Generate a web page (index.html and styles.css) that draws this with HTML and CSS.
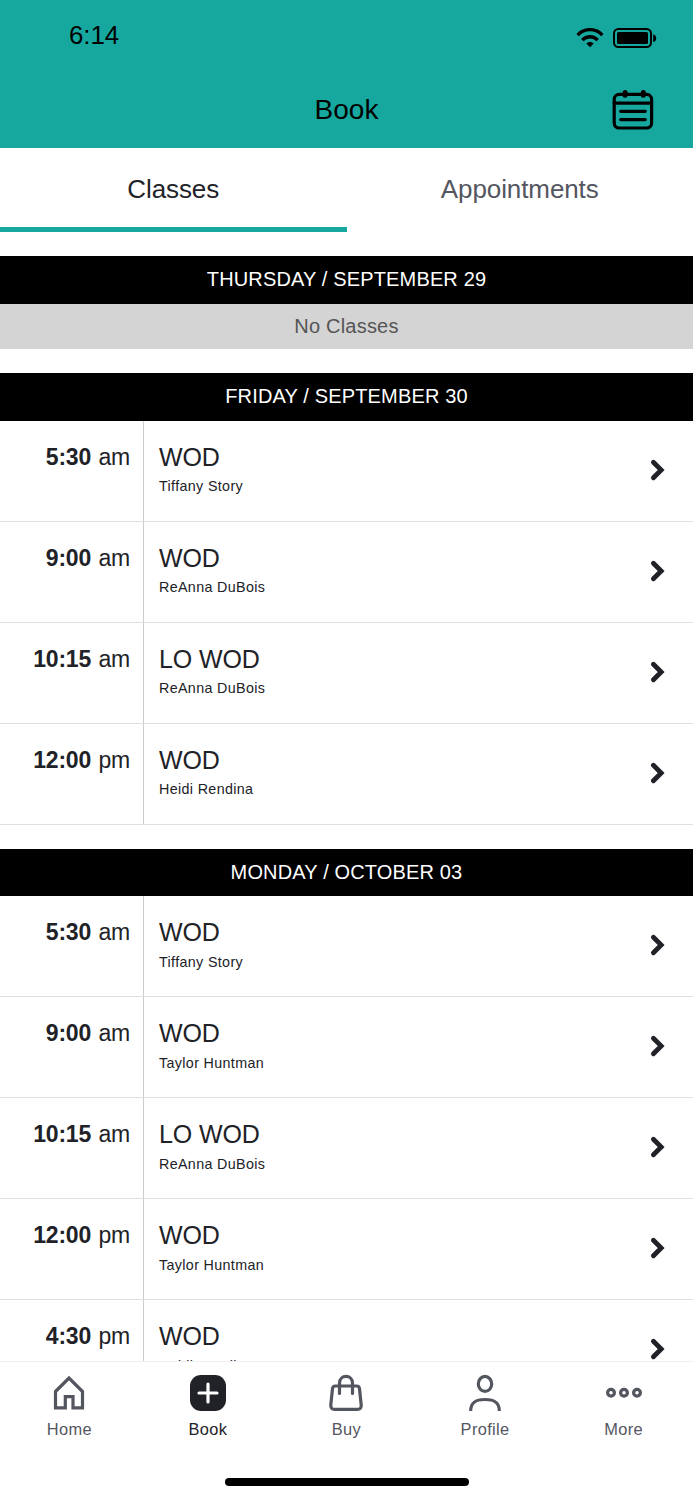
FILE: index.html
```html
<!DOCTYPE html>
<html lang="en">
<head>
<meta charset="utf-8">
<title>Book</title>
<link rel="stylesheet" href="styles.css">
</head>
<body>
<svg class="defs" width="0" height="0" aria-hidden="true">
  <symbol id="chevron" viewBox="0 0 16 24"><path d="M3.4 4.2 11.2 12 3.4 19.8" fill="none" stroke="currentColor" stroke-width="4.8" stroke-linecap="round" stroke-linejoin="miter"/></symbol>
</svg>
<div class="app">
  <header class="top">
    <div class="status">
      <span class="clock">6:14</span>
      <div class="status-icons">
        <svg width="28" height="20" viewBox="0 0 28 20"><g fill="none" stroke="#000" stroke-width="3.3"><path d="M1.6 7.1C8.5-.3 19.5-.3 26.4 7.1"/><path d="M6.3 12.1C10.5 7.6 17.5 7.6 21.7 12.1"/></g><path d="M14 19.2 10.300 15.600C11.800 13.500 16.200 13.500 17.700 15.600Z"/></svg>
        <svg width="44" height="20" viewBox="0 0 44 20"><rect x="1" y="1" width="37" height="18" rx="4.5" fill="none" stroke="#000" stroke-width="2"/><rect x="4" y="4" width="31" height="12" rx="1.5"/><path d="M40.200 6.200C44.200 7.400 44.200 13 40.200 14.200Z"/></svg>
      </div>
    </div>
    <div class="title-bar">
      <h1 class="title">Book</h1>
      <svg class="calendar" width="42" height="42" viewBox="0 0 42 42" fill="none" stroke="#000" stroke-width="3.2" stroke-linecap="round"><rect x="2.2" y="6.4" width="37.4" height="33.6" rx="5"/><path d="M2.2 15.100H39.600M8.700 23.300H33.300M8.700 31.600H33.300"/><path d="M13.100 4.400V7.300M31.300 4.400V7.300" stroke-width="5"/></svg>
    </div>
  </header>
  <nav class="tabs">
    <a class="tab tab-active">Classes</a>
    <a class="tab">Appointments</a>
  </nav>
  <main class="schedule">
    <section class="day">
      <h2 class="day-title">THURSDAY / SEPTEMBER 29</h2>
      <p class="empty">No Classes</p>
    </section>
    <section class="day">
      <h2 class="day-title">FRIDAY / SEPTEMBER 30</h2>
      <div class="row"><div class="time"><b>5:30</b> am</div><div class="info"><div class="name">WOD</div><div class="coach">Tiffany Story</div></div><svg class="chevron"><use href="#chevron"/></svg></div>
      <div class="row"><div class="time"><b>9:00</b> am</div><div class="info"><div class="name">WOD</div><div class="coach">ReAnna DuBois</div></div><svg class="chevron"><use href="#chevron"/></svg></div>
      <div class="row"><div class="time"><b>10:15</b> am</div><div class="info"><div class="name">LO WOD</div><div class="coach">ReAnna DuBois</div></div><svg class="chevron"><use href="#chevron"/></svg></div>
      <div class="row"><div class="time"><b>12:00</b> pm</div><div class="info"><div class="name">WOD</div><div class="coach">Heidi Rendina</div></div><svg class="chevron"><use href="#chevron"/></svg></div>
    </section>
    <section class="day">
      <h2 class="day-title">MONDAY / OCTOBER 03</h2>
      <div class="row"><div class="time"><b>5:30</b> am</div><div class="info"><div class="name">WOD</div><div class="coach">Tiffany Story</div></div><svg class="chevron"><use href="#chevron"/></svg></div>
      <div class="row"><div class="time"><b>9:00</b> am</div><div class="info"><div class="name">WOD</div><div class="coach">Taylor Huntman</div></div><svg class="chevron"><use href="#chevron"/></svg></div>
      <div class="row"><div class="time"><b>10:15</b> am</div><div class="info"><div class="name">LO WOD</div><div class="coach">ReAnna DuBois</div></div><svg class="chevron"><use href="#chevron"/></svg></div>
      <div class="row"><div class="time"><b>12:00</b> pm</div><div class="info"><div class="name">WOD</div><div class="coach">Taylor Huntman</div></div><svg class="chevron"><use href="#chevron"/></svg></div>
      <div class="row"><div class="time"><b>4:30</b> pm</div><div class="info"><div class="name">WOD</div><div class="coach">Heidi Rendina</div></div><svg class="chevron"><use href="#chevron"/></svg></div>
    </section>
  </main>
  <footer class="bottom">
    <nav class="nav">
      <a class="nav-item"><svg class="nav-icon" viewBox="0 0 40 40"><path d="M6.5 18.500 20 5 33.500 18.500V34.800H24V23.700H16.300V34.800H6.500Z"/></svg>Home</a>
      <a class="nav-item nav-active"><svg class="nav-icon" viewBox="0 0 40 40"><rect x="2" y="2" width="36" height="36" rx="11" fill="#212227" stroke="none"/><path d="M20 11V29M11 20H29" stroke="#fff" stroke-linecap="round"/></svg>Book</a>
      <a class="nav-item"><svg class="nav-icon" viewBox="0 0 40 40"><path d="M9.5 13H30.500Q33.200 13 33.500 15.700L35.200 31.800Q35.600 36.300 31.300 36.300H8.700Q4.400 36.300 4.800 31.800L6.500 15.700Q6.800 13 9.500 13Z"/><path d="M13.500 20.500V10.200C13.500 1.200 26.500 1.200 26.500 10.200V20.500" stroke-linecap="round"/></svg>Buy</a>
      <a class="nav-item"><svg class="nav-icon" viewBox="0 0 40 40"><ellipse cx="20" cy="10.900" rx="6.700" ry="7.500"/><path d="M5.700 37.900C5.700 30 10 26.500 20 26.500S34.300 30 34.300 37.900"/></svg>Profile</a>
      <a class="nav-item"><svg class="nav-icon" viewBox="0 0 40 40"><circle cx="7" cy="19.800" r="3.400"/><circle cx="20" cy="19.800" r="3.400"/><circle cx="33" cy="19.800" r="3.400"/></svg>More</a>
    </nav>
    <div class="home-bar"></div>
  </footer>
</div>
</body>
</html>
```
FILE: styles.css
```css
* { box-sizing: border-box; }
body { margin: 0; background: #fff; color: #212227; font-family: "Liberation Sans", Arial, sans-serif; }
.defs { position: absolute; }
.app { display: flex; flex-direction: column; height: 1500px; overflow: hidden; }
.top { flex: none; height: 147.6px; background: #16a89e; color: #000; }
.status { display: flex; justify-content: space-between; height: 70px; padding: 0 36px 0 69px; align-items: center; }
.clock { font-size: 25.8px; line-height: 30px; }
.status-icons { display: flex; gap: 9px; padding-top: 6px; }
.title-bar { display: grid; grid-template-columns: 80px 1fr 80px; align-items: center; height: 78px; }
.title { grid-column: 2; margin: 0; padding-top: 1px; font-size: 28px; line-height: 34px; font-weight: 400; text-align: center; }
.calendar { justify-self: end; margin-right: 39px; }
.tabs { flex: none; display: flex; height: 84.4px; }
.tab { flex: 1; font-size: 26px; line-height: 30px; padding-top: 26px; text-align: center; color: #54565f; letter-spacing: -.1px; border-bottom: 5px solid transparent; }
.tab-active { color: #212227; border-bottom-color: #16a89e; }
.schedule { flex: 1; min-height: 0; overflow: hidden; }
.day { padding-top: 24.1px; }
.day-title { margin: 0; height: 47.5px; background: #000; color: #fff; font-size: 20px; line-height: 47px; font-weight: 400; letter-spacing: .15px; text-align: center; }
.empty { margin: 0; height: 45.5px; background: #d4d4d4; color: #555; font-size: 20px; line-height: 45px; letter-spacing: .2px; text-align: center; }
.row { display: flex; height: 101px; border-bottom: 1px solid #dedfe3; }
.time { width: 144px; border-right: 1px solid #cccdd3; padding: 21.1px 13px 0 0; text-align: right; font-size: 23px; line-height: 31px; letter-spacing: -.2px; word-spacing: 1.2px; }
.info { flex: 1; padding: 21.1px 0 0 15px; }
.name { font-size: 25px; line-height: 31px; letter-spacing: -.1px; }
.coach { font-size: 14.3px; line-height: 18px; margin-top: 4.5px; letter-spacing: .35px; }
.chevron { width: 16px; height: 24px; margin: 37px 27px 0 0; }
.bottom { flex: none; height: 138.8px; border-top: 1px solid #f0f0f2; background: #fff; }
.nav { display: flex; padding-top: 10.8px; }
.nav-item { flex: 1; display: flex; flex-direction: column; align-items: center; font-size: 16.4px; line-height: 20px; letter-spacing: .35px; color: #54565f; }
.nav-active { color: #212227; }
.nav-icon { width: 40px; height: 40px; margin-bottom: 5.5px; fill: none; stroke: #54565f; stroke-width: 3.2; }
.home-bar { width: 244px; height: 8px; margin: 39px auto 0; border-radius: 4px; background: #000; }
```
